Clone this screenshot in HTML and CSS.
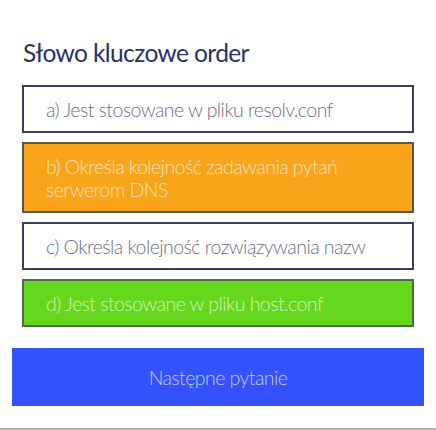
FILE: index.html
```html
<!DOCTYPE html>
<html lang="pl">
<head>
<meta charset="utf-8">
<link rel="stylesheet" href="styles.css">
</head>
<body>
<main class="quiz">
  <h1 class="title">Słowo kluczowe order</h1>
  <ul class="options">
    <li class="option">a) Jest stosowane w pliku resolv.conf</li>
    <li class="option option-wrong">b) Określa kolejność zadawania pytań serwerom DNS</li>
    <li class="option">c) Określa kolejność rozwiązywania nazw</li>
    <li class="option option-right">d) Jest stosowane w pliku host.conf</li>
  </ul>
  <button class="next">Następne pytanie</button>
</main>
<div class="bottom-edge"></div>
</body>
</html>
```
FILE: styles.css
```css
html, body {
  margin: 0;
  padding: 0;
  background: #ffffff;
}
body {
  width: 436px;
  height: 430px;
  position: relative;
  overflow: hidden;
  font-family: Lato, "Open Sans", sans-serif;
}
.quiz {
  padding: 38px 12px 0 12px;
  display: flex;
  flex-direction: column;
}
.title {
  margin: 0 0 18px 11px;
  font-size: 24.5px;
  font-weight: 400;
  line-height: 29px;
  letter-spacing: -0.6px;
  color: #2a3068;
}
.options {
  list-style: none;
  margin: 0 10px;
  padding: 0;
  display: flex;
  flex-direction: column;
  gap: 9px;
}
.option {
  border: 2px solid #3b3f5e;
  padding: 10.5px 18px 10.5px 22px;
  font-size: 19.5px;
  font-weight: 300;
  line-height: 23px;
  letter-spacing: -0.55px;
  color: #6d7082;
  background: #ffffff;
}
.option-wrong {
  background: #f8a51b;
  border-color: #5c5650;
  color: rgba(255, 255, 255, 0.7);
}
.option-right {
  background: #65d81d;
  border-color: #4f6a48;
  color: rgba(255, 255, 255, 0.7);
}
.next {
  margin-top: 21px;
  height: 58px;
  border: none;
  background: #3452fd;
  color: #c6cdfb;
  font-family: Lato, "Open Sans", sans-serif;
  font-size: 19.5px;
  font-weight: 300;
  letter-spacing: -0.55px;
  padding: 0;
}
.bottom-edge {
  position: absolute;
  left: 0;
  right: 0;
  bottom: 0;
  height: 2px;
  background: #b4b4b4;
}
```
